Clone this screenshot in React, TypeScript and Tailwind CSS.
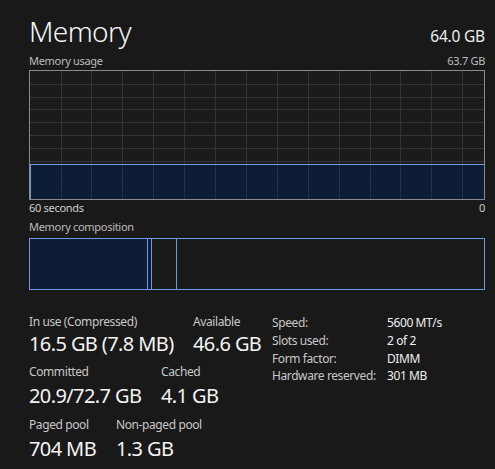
import React from "react";

const W = 454;
const H = 128;

function UsageGraph() {
  const vLines = Array.from({ length: 14 }, (_, k) => 30.5 + 30.9 * k);
  const hLines = Array.from({ length: 9 }, (_, k) => 12.8 * (k + 1));
  const fillTop = 93;
  return (
    <svg width={W} height={H} className="block">
      <rect x={0} y={0} width={W} height={H} fill="#1b1b1b" />
      {vLines.map((x, i) => (
        <line key={"v" + i} x1={Math.round(x) + 0.5} y1={0} x2={Math.round(x) + 0.5} y2={H} stroke="#343434" strokeWidth={1} />
      ))}
      {hLines.map((y, i) => (
        <line key={"h" + i} x1={0} y1={Math.round(y) + 0.5} x2={W} y2={Math.round(y) + 0.5} stroke="#343434" strokeWidth={1} />
      ))}
      <rect x={0} y={fillTop} width={W} height={H - fillTop} fill="#0e1d37" fillOpacity={0.96} />
      {vLines.map((x, i) => (
        <line key={"fv" + i} x1={Math.round(x) + 0.5} y1={fillTop} x2={Math.round(x) + 0.5} y2={H} stroke="#22324d" strokeWidth={1} />
      ))}
      <line x1={0} y1={fillTop + 0.5} x2={W} y2={fillTop + 0.5} stroke="#6a9ae0" strokeWidth={1} />
      <line x1={0.5} y1={fillTop} x2={0.5} y2={H} stroke="#6a9ae0" strokeWidth={1} />
    </svg>
  );
}

const label = "text-[12px] leading-[16px] tracking-[-0.4px] text-[#c8c8c8]";
const value = "text-[20px] leading-[24px] tracking-[-0.6px] text-[#f4f4f4]";

export default function App() {
  const font = { fontFamily: '"Noto Sans", "Open Sans", sans-serif' };
  return (
    <div className="w-[495px] h-[469px] bg-[#191919] text-white pl-[29px] pr-[10px] overflow-hidden" style={font}>
      <div className="flex items-baseline justify-between pt-[14px]">
        <div className="text-[28px] leading-[34px] font-light tracking-[-0.6px] text-[#f4f4f4]">Memory</div>
        <div className="text-[15.5px] leading-[20px] tracking-[-0.2px] text-[#eeeeee]">64.0 GB</div>
      </div>
      <div className="flex justify-between mt-[6px] text-[11px] leading-[14px] tracking-[-0.3px] text-[#bdbdbd]">
        <span>Memory usage</span>
        <span>63.7 GB</span>
      </div>
      <div className="mt-[2px] border border-[#8a8a8a] w-[456px] h-[130px]">
        <UsageGraph />
      </div>
      <div className="flex justify-between mt-[1px] text-[11px] leading-[14px] tracking-[-0.3px] text-[#cfcfcf]">
        <span>60 seconds</span>
        <span>0</span>
      </div>
      <div className="mt-[5px] text-[11px] leading-[14px] tracking-[-0.3px] text-[#bdbdbd]">Memory composition</div>
      <div className="mt-[4px] w-[456px] h-[52px] border border-[#6a9ae0] flex">
        <div className="w-[118px] bg-[#0e1d37] border-r border-[#6a9ae0]" />
        <div className="w-[4px] bg-[#0e1d37] border-r border-[#6a9ae0]" />
        <div className="w-[25px] border-r border-[#6a9ae0]" />
        <div className="flex-1" />
      </div>

      <div className="flex items-start mt-[24px]">
        <div className="w-[243px]">
          <div className="flex">
            <div className="w-[164px]">
              <div className={label}>In use (Compressed)</div>
              <div className={"mt-[2px] " + value}>16.5 GB (7.8 MB)</div>
            </div>
            <div>
              <div className={label}>Available</div>
              <div className={"mt-[2px] " + value}>46.6 GB</div>
            </div>
          </div>
          <div className="flex mt-[8px]">
            <div className="w-[132px]">
              <div className={label}>Committed</div>
              <div className={"mt-[4px] " + value}>20.9/72.7 GB</div>
            </div>
            <div>
              <div className={label}>Cached</div>
              <div className={"mt-[4px] " + value}>4.1 GB</div>
            </div>
          </div>
          <div className="flex mt-[9px]">
            <div className="w-[87px]">
              <div className={label}>Paged pool</div>
              <div className={"mt-[4px] " + value}>704 MB</div>
            </div>
            <div>
              <div className={label}>Non-paged pool</div>
              <div className={"mt-[4px] " + value}>1.3 GB</div>
            </div>
          </div>
        </div>
        <div className="grid grid-cols-[115px_auto] content-start text-[12px] leading-[17.8px] tracking-[-0.4px]">
          <span className="text-[#c8c8c8]">Speed:</span>
          <span className="text-[#f0f0f0]">5600 MT/s</span>
          <span className="text-[#c8c8c8]">Slots used:</span>
          <span className="text-[#f0f0f0]">2 of 2</span>
          <span className="text-[#c8c8c8]">Form factor:</span>
          <span className="text-[#f0f0f0]">DIMM</span>
          <span className="text-[#c8c8c8]">Hardware reserved:</span>
          <span className="text-[#f0f0f0]">301 MB</span>
        </div>
      </div>
    </div>
  );
}
